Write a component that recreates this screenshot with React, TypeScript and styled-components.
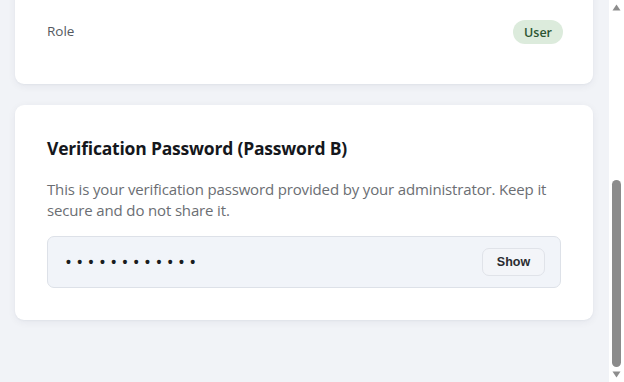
import React from "react";
import styled, { createGlobalStyle } from "styled-components";

const Global = createGlobalStyle`
  html, body { margin: 0; padding: 0; height: 100%; overflow: hidden; }
  body {
    font-family: "Open Sans", "Noto Sans", sans-serif;
    background: #f1f3f7;
  }
  #root { height: 100%; }
`;

const Frame = styled.div`
  display: flex;
  height: 100vh;
  overflow: hidden;
`;

const Viewport = styled.main`
  flex: 1;
  min-width: 0;
  overflow: hidden;
  display: flex;
  flex-direction: column;
  justify-content: flex-end;
  background: #f1f3f7;
`;

const Page = styled.div`
  display: flex;
  flex-direction: column;
  gap: 21px;
  padding: 0 16px 62px 15px;
`;

const ScrollBar = styled.div`
  width: 15px;
  flex: none;
  background: #ffffff;
  display: flex;
  flex-direction: column;
`;

const Arrow = styled.div`
  height: 15px;
  width: 15px;
  flex: none;
  display: flex;
  align-items: center;
  justify-content: center;
  & > svg {
    display: block;
  }
`;

const Track = styled.div`
  flex: 1;
  display: flex;
  flex-direction: column;
  justify-content: flex-end;
  align-items: center;
`;

const Thumb = styled.div<{ $size: number }>`
  width: 9px;
  height: ${(p) => p.$size}px;
  border-radius: 5px;
  background: #8b8b8b;
`;

const Card = styled.section`
  background: #ffffff;
  border-radius: 9px;
  box-shadow: 0 2px 8px rgba(30, 40, 70, 0.06), 0 1px 2px rgba(30, 40, 70, 0.04);
  padding: 31px 32px 32px;
`;

const InfoCard = styled(Card)`
  padding: 48px 30px 40px 32px;
`;

const Heading = styled.h2`
  margin: 0;
  font-family: "Open Sans", sans-serif;
  font-size: 17.5px;
  font-weight: 700;
  color: #15171c;
  letter-spacing: -0.2px;
`;

const Row = styled.div`
  display: flex;
  align-items: center;
  justify-content: space-between;
  height: 24px;
`;

const Label = styled.span`
  font-size: 13.5px;
  color: #55595f;
  line-height: 20px;
  padding-bottom: 2px;
`;

const Badge = styled.span`
  display: inline-flex;
  align-items: center;
  height: 24px;
  padding: 0 11px;
  border-radius: 12px;
  background: #dcebdc;
  color: #2c5532;
  font-size: 12.5px;
  font-weight: 600;
`;

const Desc = styled.p`
  margin: 19px 0 15px;
  font-size: 15px;
  line-height: 21px;
  color: #6b6e73;
  letter-spacing: -0.15px;
`;

const SecretBox = styled.div`
  display: flex;
  align-items: center;
  justify-content: space-between;
  height: 52px;
  box-sizing: border-box;
  padding: 0 15px 0 18px;
  background: #f1f4f9;
  border: 1px solid #dde1e8;
  border-radius: 7px;
`;

const Dots = styled.span`
  font-family: "Liberation Sans", Arial, sans-serif;
  font-size: 14px;
  letter-spacing: 6.4px;
  color: #1a1c20;
  font-weight: 700;
`;

const ShowButton = styled.button`
  height: 28px;
  width: 63px;
  border-radius: 7px;
  border: 1px solid #e0e3e9;
  background: #f3f5f9;
  font-family: "Liberation Sans", Arial, sans-serif;
  font-size: 12.5px;
  font-weight: 700;
  color: #2a2c31;
  cursor: pointer;
`;

const Tri = ({ down }: { down?: boolean }) => (
  <svg width="9" height="7" viewBox="0 0 9 7">
    <path d={down ? "M0.5 0.5 L8.5 0.5 L4.5 6.5 Z" : "M0.5 6.5 L8.5 6.5 L4.5 0.5 Z"} fill="#8d8d8d" />
  </svg>
);

export default function App() {
  return (
    <>
      <Global />
      <Frame>
        <Viewport>
          <Page>
            <InfoCard>
              <Row>
                <Label>Role</Label>
                <Badge>User</Badge>
              </Row>
            </InfoCard>
            <Card>
              <Heading>Verification Password (Password B)</Heading>
              <Desc>
                This is your verification password provided by your administrator. Keep it
                secure and do not share it.
              </Desc>
              <SecretBox>
                <Dots>{"•".repeat(12)}</Dots>
                <ShowButton>Show</ShowButton>
              </SecretBox>
            </Card>
          </Page>
        </Viewport>
        <ScrollBar>
          <Arrow>
            <Tri />
          </Arrow>
          <Track>
            <Thumb $size={187} />
          </Track>
          <Arrow>
            <Tri down />
          </Arrow>
        </ScrollBar>
      </Frame>
    </>
  );
}
